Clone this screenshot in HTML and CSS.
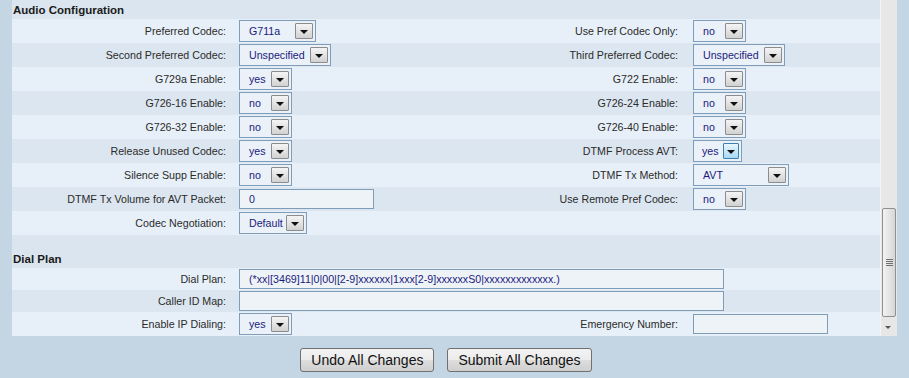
FILE: index.html
```html
<!DOCTYPE html>
<html lang="en">
<head>
    <meta charset="UTF-8">
    <title>Audio Configuration</title>
    <link rel="stylesheet" href="styles.css">
</head>
<body>
    <div class="frame">
        <div class="panel">
            <div class="sec-head">Audio Configuration</div>

            <div class="row light">
                <span class="lbl">Preferred Codec:</span>
                <span class="ctl"><span class="sel w-codec"><span class="val">G711a</span><span class="drop"></span></span></span>
                <span class="lbl lbl-r">Use Pref Codec Only:</span>
                <span class="ctl"><span class="sel w-yn"><span class="val">no</span><span class="drop"></span></span></span>
            </div>
            <div class="row dark">
                <span class="lbl">Second Preferred Codec:</span>
                <span class="ctl"><span class="sel w-wide"><span class="val">Unspecified</span><span class="drop"></span></span></span>
                <span class="lbl lbl-r">Third Preferred Codec:</span>
                <span class="ctl"><span class="sel w-wide"><span class="val">Unspecified</span><span class="drop"></span></span></span>
            </div>
            <div class="row light">
                <span class="lbl">G729a Enable:</span>
                <span class="ctl"><span class="sel w-yn"><span class="val">yes</span><span class="drop"></span></span></span>
                <span class="lbl lbl-r">G722 Enable:</span>
                <span class="ctl"><span class="sel w-yn"><span class="val">no</span><span class="drop"></span></span></span>
            </div>
            <div class="row dark">
                <span class="lbl">G726-16 Enable:</span>
                <span class="ctl"><span class="sel w-yn"><span class="val">no</span><span class="drop"></span></span></span>
                <span class="lbl lbl-r">G726-24 Enable:</span>
                <span class="ctl"><span class="sel w-yn"><span class="val">no</span><span class="drop"></span></span></span>
            </div>
            <div class="row light">
                <span class="lbl">G726-32 Enable:</span>
                <span class="ctl"><span class="sel w-yn"><span class="val">no</span><span class="drop"></span></span></span>
                <span class="lbl lbl-r">G726-40 Enable:</span>
                <span class="ctl"><span class="sel w-yn"><span class="val">no</span><span class="drop"></span></span></span>
            </div>
            <div class="row dark">
                <span class="lbl">Release Unused Codec:</span>
                <span class="ctl"><span class="sel w-yn"><span class="val">yes</span><span class="drop"></span></span></span>
                <span class="lbl lbl-r">DTMF Process AVT:</span>
                <span class="ctl"><span class="sel w-yn-narrow hover"><span class="val">yes</span><span class="drop"></span></span></span>
            </div>
            <div class="row light">
                <span class="lbl">Silence Supp Enable:</span>
                <span class="ctl"><span class="sel w-yn"><span class="val">no</span><span class="drop"></span></span></span>
                <span class="lbl lbl-r">DTMF Tx Method:</span>
                <span class="ctl"><span class="sel w-method"><span class="val">AVT</span><span class="drop"></span></span></span>
            </div>
            <div class="row dark">
                <span class="lbl">DTMF Tx Volume for AVT Packet:</span>
                <span class="ctl"><span class="txt w-short">0</span></span>
                <span class="lbl lbl-r">Use Remote Pref Codec:</span>
                <span class="ctl"><span class="sel w-yn"><span class="val">no</span><span class="drop"></span></span></span>
            </div>
            <div class="row light">
                <span class="lbl">Codec Negotiation:</span>
                <span class="ctl"><span class="sel w-default"><span class="val">Default</span><span class="drop"></span></span></span>
            </div>

            <div class="sec-head sec-gap">Dial Plan</div>

            <div class="row light short">
                <span class="lbl">Dial Plan:</span>
                <span class="ctl span-3"><span class="txt w-long">(*xx|[3469]11|0|00|[2-9]xxxxxx|1xxx[2-9]xxxxxxS0|xxxxxxxxxxxxx.)</span></span>
            </div>
            <div class="row dark short">
                <span class="lbl">Caller ID Map:</span>
                <span class="ctl span-3"><span class="txt w-long"></span></span>
            </div>
            <div class="row light">
                <span class="lbl">Enable IP Dialing:</span>
                <span class="ctl"><span class="sel w-yn"><span class="val">yes</span><span class="drop"></span></span></span>
                <span class="lbl lbl-r">Emergency Number:</span>
                <span class="ctl"><span class="txt w-short"></span></span>
            </div>
        </div>

        <div class="scrollbar">
            <div class="track"></div>
            <div class="thumb"><span class="grip"></span></div>
            <div class="track-end"></div>
            <div class="arrow-down"></div>
        </div>
    </div>

    <div class="actions">
        <button class="btn">Undo All Changes</button>
        <button class="btn">Submit All Changes</button>
    </div>
</body>
</html>
```

FILE: styles.css
```css
body {
    margin: 0;
    padding: 0;
    background-color: #c4d6e4;
    font-family: "Liberation Sans", Arial, sans-serif;
    font-size: 8pt;
    color: #2b2b2b;
}
.frame {
    display: flex;
    padding-left: 12px;
    height: 336px;
}
.panel {
    width: 868px;
    background-color: #dae5ef;
}
.sec-head {
    height: 19px;
    line-height: 21px;
    padding-left: 1px;
    font-size: 11.5px;
    font-weight: bold;
    color: #1a1a1a;
}
.sec-gap {
    height: 19px;
    padding-top: 14px;
}
.row {
    display: grid;
    grid-template-columns: 227px 227px 227px 1fr;
    align-items: center;
    height: 24px;
}
.row.short {
    height: 22px;
}
.light {
    background-color: #e7f0f8;
}
.dark {
    background-color: #dce6f0;
}
.lbl {
    text-align: right;
    padding-right: 13px;
    white-space: nowrap;
}
.lbl-r {
    padding-right: 15px;
}
.ctl {
    display: flex;
}
.span-3 {
    grid-column: 2 / 5;
}
.sel {
    display: flex;
    align-items: center;
    justify-content: space-between;
    box-sizing: border-box;
    height: 22px;
    padding: 0 2px 0 9px;
    border: 1px solid #7f9db9;
    background-color: #eaf1f8;
    color: #1b1b7c;
}
.sel .drop {
    position: relative;
    flex: none;
    box-sizing: border-box;
    width: 18px;
    height: 16px;
    border: 1px solid #8c8c8c;
    border-radius: 1px;
    background: linear-gradient(#f4f4f4, #d2d2d2);
}
.sel .drop::after {
    content: "";
    position: absolute;
    left: 4px;
    top: 6px;
    border-left: 4px solid transparent;
    border-right: 4px solid transparent;
    border-top: 4px solid #111;
}
.sel.hover .drop {
    width: 16px;
    border-color: #3c7fb1;
    background: linear-gradient(#e9f6fd, #a7d9f5);
}
.sel.hover .drop::after {
    left: 3px;
}
.w-codec { width: 77px; }
.w-wide { width: 92px; }
.w-yn { width: 53px; }
.w-yn-narrow { width: 49px; padding-left: 8px; }
.w-default { width: 68px; }
.w-method { width: 96px; }
.txt {
    display: block;
    box-sizing: border-box;
    height: 20px;
    line-height: 18px;
    padding-left: 9px;
    border: 1px solid #7f9db9;
    background-color: #eef3f8;
    color: #1b1b7c;
    white-space: nowrap;
    overflow: hidden;
}
.w-short { width: 135px; }
.w-long { width: 485px; }
.scrollbar {
    display: flex;
    flex-direction: column;
    width: 16px;
    background-color: #e7e7e7;
    border-left: 1px solid #f4f4f4;
}
.track {
    height: 208px;
}
.thumb {
    display: flex;
    align-items: center;
    justify-content: center;
    box-sizing: border-box;
    height: 109px;
    margin: 0 1px;
    border: 1px solid #8e8f8f;
    border-radius: 2px;
    background: linear-gradient(90deg, #f3f3f3, #d6d6d6);
}
.grip {
    width: 7px;
    height: 7px;
    background: repeating-linear-gradient(#6f6f6f 0 1px, transparent 1px 2px);
}
.track-end {
    flex: 1;
}
.arrow-down {
    height: 12px;
    position: relative;
}
.arrow-down::after {
    content: "";
    position: absolute;
    left: 4px;
    top: 2px;
    border-left: 3px solid transparent;
    border-right: 3px solid transparent;
    border-top: 3px solid #555;
}
.actions {
    display: flex;
    justify-content: center;
    gap: 13px;
    width: 868px;
    margin-left: 12px;
    padding-top: 12px;
}
.btn {
    height: 24px;
    padding: 0 10px;
    border: 1px solid #707070;
    border-radius: 3px;
    background: linear-gradient(#f3f3f3 0%, #ebebeb 50%, #dddddd 51%, #cfcfcf 100%);
    font-family: "Liberation Sans", Arial, sans-serif;
    font-size: 14px;
    color: #111;
}
```
